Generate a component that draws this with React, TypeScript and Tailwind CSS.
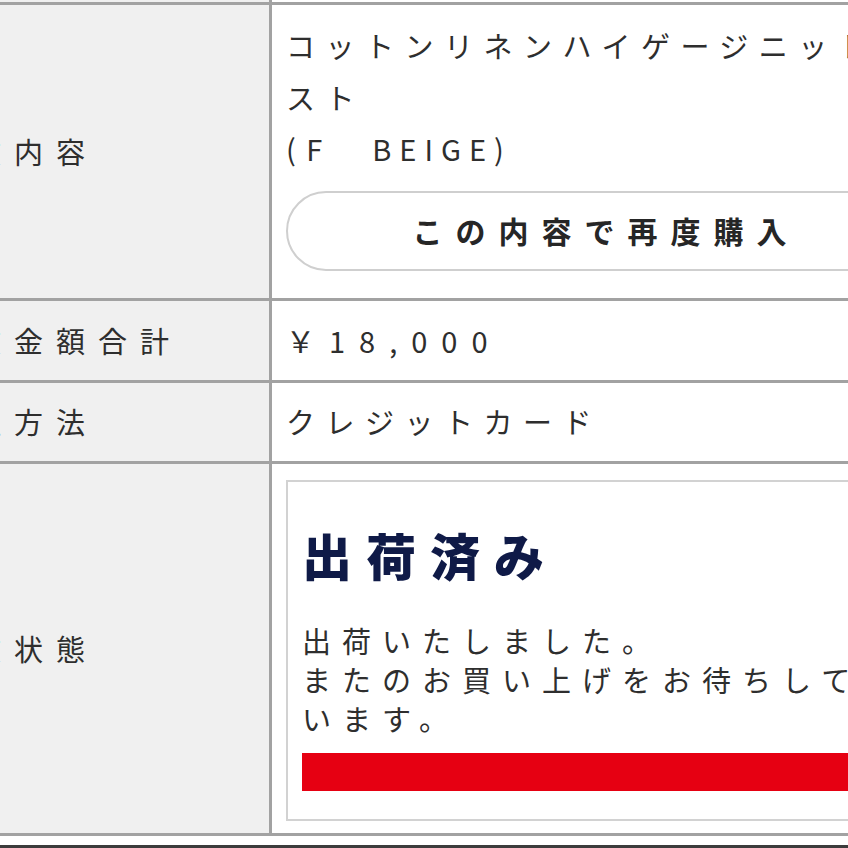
export default function App() {
  const border = "border-[#a2a2a2]";
  return (
    <div className="w-[848px] h-[848px] overflow-hidden bg-white text-[#2e2e2e] font-['Noto_Sans_CJK_JP','Noto_Sans',sans-serif]">
      <div className="ml-[-90px] w-[1100px] flex flex-col">
        {/* row above (cropped) */}
        <div className={`flex h-[5px] border-b-[3px] ${border}`}>
          <div className={`w-[362px] shrink-0 bg-[#f0f0f0] border-r-[3px] ${border}`} />
          <div className="flex-1" />
        </div>

        {/* row 1: order content */}
        <div className={`flex h-[296px] border-b-[3px] ${border}`}>
          <div className={`w-[362px] shrink-0 bg-[#f0f0f0] border-r-[3px] ${border} flex items-center pl-[20px] text-[29px] tracking-[13px]`}>
            注文内容
          </div>
          <div className="flex-1 pl-[14px] pt-[15px]">
            <div className="w-[640px] text-[29px] leading-[51.5px] tracking-[10.5px]">
              コットンリネンハイゲージニットベスト
              <br />
              (F　<span className="tracking-[8px]">BEIGE)</span>
            </div>
            <div className="mt-[16px] w-[640px] h-[80px] rounded-full border-2 border-[#cfcfcf] flex items-center justify-center text-[30px] font-bold tracking-[13px] text-[#262626]">
              この内容で再度購入
            </div>
          </div>
        </div>

        {/* row 2: total */}
        <div className={`flex h-[82px] border-b-[3px] ${border}`}>
          <div className={`w-[362px] shrink-0 bg-[#f0f0f0] border-r-[3px] ${border} flex items-center pl-[20px] text-[29px] tracking-[13px]`}>
            注文金額合計
          </div>
          <div className="flex-1 pl-[14px] flex items-center text-[29px] tracking-[14px]">
            ￥18,000
          </div>
        </div>

        {/* row 3: payment */}
        <div className={`flex h-[81px] border-b-[3px] ${border}`}>
          <div className={`w-[362px] shrink-0 bg-[#f0f0f0] border-r-[3px] ${border} flex items-center pl-[20px] text-[29px] tracking-[13px]`}>
            支払方法
          </div>
          <div className="flex-1 pl-[14px] flex items-center text-[29px] tracking-[10.5px]">
            クレジットカード
          </div>
        </div>

        {/* row 4: status */}
        <div className={`flex h-[372px] border-b-[3px] ${border}`}>
          <div className={`w-[362px] shrink-0 bg-[#f0f0f0] border-r-[3px] ${border} flex items-center pl-[20px] text-[29px] tracking-[13px]`}>
            注文状態
          </div>
          <div className="flex-1 pl-[14px] pt-[16px]">
            <div className="w-[607px] h-[341px] border-2 border-[#d2d2d2] px-[14px] pt-[42px]">
              <div className="text-[50px] leading-[60px] font-black tracking-[14px] text-[#0f1a47]">
                出荷済み
              </div>
              <div className="mt-[37px] text-[29px] leading-[39px] tracking-[11px]">
                出荷いたしました。
                <br />
                またのお買い上げをお待ちしています。
              </div>
              <div className="mt-[15px] h-[38px] bg-[#e60012]" />
            </div>
          </div>
        </div>

        <div className="h-[9px] bg-white" />
        <div className="h-[3px] bg-[#3c3c3c]" />
      </div>
    </div>
  );
}
